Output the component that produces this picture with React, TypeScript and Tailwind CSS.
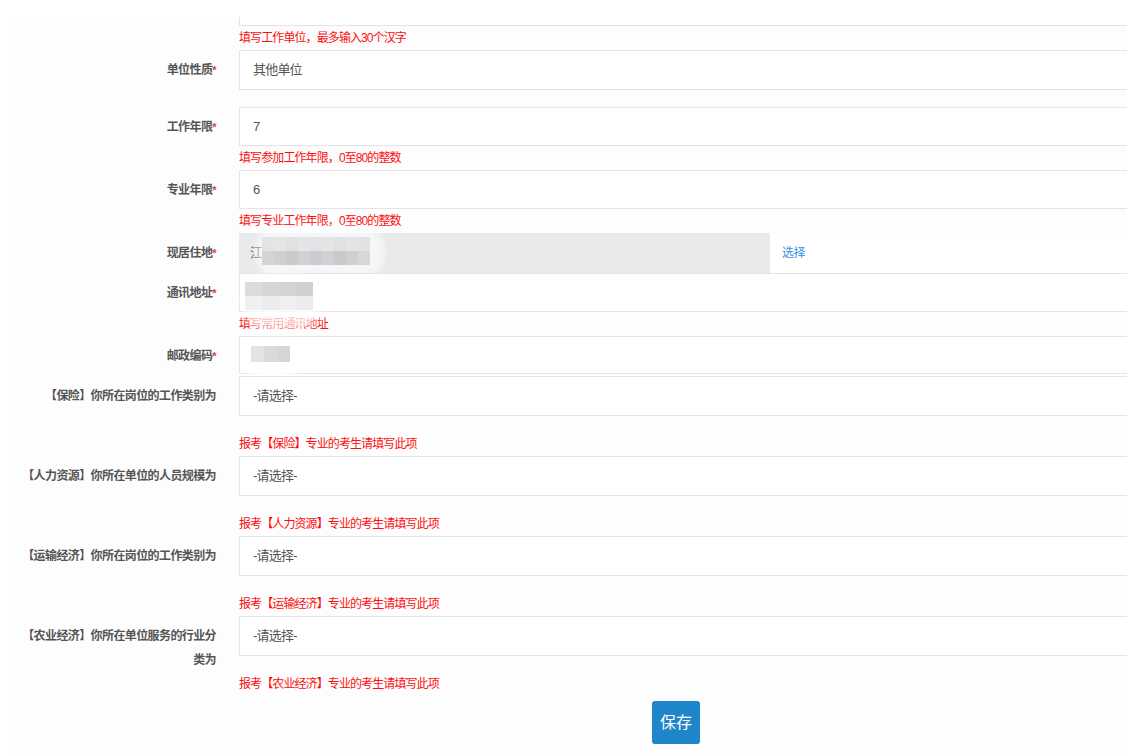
import React from 'react';

const labelCls =
  'w-[201px] shrink-0 text-right pt-[8px] leading-[24px] text-[12px] font-bold text-[#555] tracking-[-0.6px]';
const hintCls = 'h-[24px] flex items-center text-[12px] text-[#ff0d0d] tracking-[-0.9px]';
const boxCls =
  'border border-[#e4e4e4] bg-white flex items-center px-[13px] text-[13px] text-[#555] tracking-[-0.8px]';

interface RowProps {
  label?: string;
  required?: boolean;
  className?: string;
  children: React.ReactNode;
}

const Row: React.FC<RowProps> = ({ label, required, className = '', children }) => (
  <div className={`flex ${className}`}>
    <div className={labelCls}>
      {label}
      {required && <span className="text-[#e8383d] text-[11px] align-top">*</span>}
    </div>
    <div className="ml-[23px] w-[900px] shrink-0 relative">{children}</div>
  </div>
);

// pixelated patch covering personal data
const Mosaic: React.FC<{ rows: string[][]; cell: number; h: number; className: string }> = ({
  rows,
  cell,
  h,
  className,
}) => (
  <div className={`absolute flex flex-col blur-[0.6px] ${className}`}>
    {rows.map((r, i) => (
      <div key={i} className="flex">
        {r.map((c, j) => (
          <div key={j} style={{ width: cell, height: h, background: c }} />
        ))}
      </div>
    ))}
  </div>
);

const selectRows = [
  { label: '【保险】你所在岗位的工作类别为', hint: '报考【保险】专业的考生请填写此项' },
  { label: '【人力资源】你所在单位的人员规模为', hint: '报考【人力资源】专业的考生请填写此项' },
  { label: '【运输经济】你所在岗位的工作类别为', hint: '报考【运输经济】专业的考生请填写此项' },
  { label: '【农业经济】你所在单位服务的行业分类为', hint: '报考【农业经济】专业的考生请填写此项' },
];

export default function App() {
  return (
    <div className="min-h-screen bg-white pt-[17px] [font-family:'Liberation_Sans','Noto_Sans_CJK_SC',sans-serif]">
      <div className="ml-[15px] w-[1112px] min-h-[737px] bg-[#fdfdfd] overflow-hidden">
        {/* tail of the work unit field */}
        <Row>
          <div className={`${boxCls} h-[9px] border-t-0`} />
          <div className={hintCls}>填写工作单位，最多输入30个汉字</div>
        </Row>

        <Row label="单位性质" required>
          <div className={`${boxCls} h-[40px]`}>其他单位</div>
        </Row>

        <Row label="工作年限" required className="mt-[17px]">
          <div className={`${boxCls} h-[39px]`}>7</div>
          <div className={hintCls}>填写参加工作年限，0至80的整数</div>
        </Row>

        <Row label="专业年限" required>
          <div className={`${boxCls} h-[39px]`}>6</div>
          <div className={hintCls}>填写专业工作年限，0至80的整数</div>
        </Row>

        <Row label="现居住地" required>
          <div className="flex h-[40px] bg-white">
            <div className="w-[531px] h-full bg-[#e7e9eb] flex items-center px-[11px] text-[13px] text-[#555]">
              江
            </div>
            <button className="pl-[12px] text-[12px] text-[#3a8ee6] tracking-[-0.5px]">选择</button>
          </div>
          <div className="absolute left-[16px] top-[-6px] w-[130px] h-[50px] rounded-[22px] bg-white/60 blur-[3px]" />
          <Mosaic
            className="left-[23px] top-[4px]"
            cell={12}
            h={14}
            rows={[
              ['#e2e4e6', '#e5e6e8', '#dfe1e3', '#e3e5e7', '#e1e3e5', '#e4e5e7', '#dfe1e2', '#e3e4e6', '#e0e2e4'],
              ['#d3d4d6', '#cfd0d2', '#c9cacc', '#d1d2d4', '#cbcccf', '#d0d1d3', '#c8c9cb', '#cfd0d2', '#d6d7d9'],
            ]}
          />
        </Row>

        <Row label="通讯地址" required>
          <div className={`${boxCls} h-[39px]`} />
          <div className={`${hintCls} relative`}>填写常用通讯地址</div>
          <div className="absolute left-[2px] top-[2px] w-[82px] h-[54px] rounded-[26px] bg-white/70 blur-[3px]" />
          <Mosaic
            className="left-[6px] top-[9px]"
            cell={17}
            h={14}
            rows={[
              ['#dcdcdc', '#d6d6d6', '#d3d3d3', '#cfd0d1'],
              ['#f0f0f0', '#ececec', '#efefef', '#ebebeb'],
            ]}
          />
        </Row>

        <Row label="邮政编码" required>
          <div className={`${boxCls} h-[38px]`} />
          <div className="absolute left-[8px] top-[4px] w-[50px] h-[46px] rounded-[22px] bg-white/80 blur-[3px]" />
          <Mosaic
            className="left-[12px] top-[10px]"
            cell={13}
            h={16}
            rows={[['#e4e4e4', '#dadada', '#d6d6d6']]}
          />
        </Row>

        {selectRows.map((r, i) => (
          <Row key={r.label} label={r.label} className={i === 0 ? 'mt-[2px]' : ''}>
            <div className={`${boxCls} h-[40px]`}>-请选择-</div>
            <div className={`${hintCls} mt-[16px]`}>{r.hint}</div>
          </Row>
        ))}

        <div className="flex mt-[5px]">
          <div className="w-[201px] shrink-0" />
          <div className="ml-[23px] pl-[413px]">
            <button className="w-[48px] h-[43px] rounded-[3px] bg-[#1f86c9] text-white text-[16px]">保存</button>
          </div>
        </div>
      </div>
    </div>
  );
}
